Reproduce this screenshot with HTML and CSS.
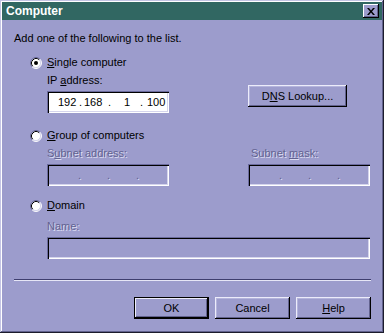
FILE: index.html
```html
<!DOCTYPE html>
<html>
<head>
<meta charset="utf-8">
<link rel="stylesheet" href="styles.css">
</head>
<body>
<div class="window">
  <div class="titlebar">
    <span class="title">Computer</span>
    <span class="close-btn">
      <svg width="8" height="7" viewBox="0 0 8 7"><path d="M0 0h2l2 2.5L6 0h2L5 3.5 8 7H6L4 4.5 2 7H0l3-3.5z" fill="#000"/></svg>
    </span>
  </div>
  <div class="content">
    <div class="intro">Add one of the following to the list.</div>

    <div class="radio-row first">
      <svg class="radio" width="12" height="12" viewBox="0 0 12 12">
        <circle cx="6" cy="6" r="5" fill="#fff"/>
        <path d="M2.11 9.89A5.5 5.5 0 0 1 9.89 2.11" fill="none" stroke="#6a6a9c"/>
        <path d="M9.89 2.11A5.5 5.5 0 0 1 2.11 9.89" fill="none" stroke="#fff"/>
        <path d="M2.82 9.18A4.5 4.5 0 0 1 9.18 2.82" fill="none" stroke="#000"/>
        <path d="M9.18 2.82A4.5 4.5 0 0 1 2.82 9.18" fill="none" stroke="#d4d4ec"/>
        <circle cx="6" cy="6" r="2" fill="#000"/>
      </svg>
      <span><u>S</u>ingle computer</span>
    </div>
    <div class="sub">
      <div class="label">IP <u>a</u>ddress:</div>
      <div class="field-row">
        <div class="box ip-box">
          <span>192</span><span>.</span><span>168</span><span>.</span><span>1</span><span>.</span><span>100</span>
        </div>
        <button class="btn dns">D<u>N</u>S Lookup...</button>
      </div>
    </div>

    <div class="radio-row group">
      <svg class="radio" width="12" height="12" viewBox="0 0 12 12">
        <circle cx="6" cy="6" r="5" fill="#fff"/>
        <path d="M2.11 9.89A5.5 5.5 0 0 1 9.89 2.11" fill="none" stroke="#6a6a9c"/>
        <path d="M9.89 2.11A5.5 5.5 0 0 1 2.11 9.89" fill="none" stroke="#fff"/>
        <path d="M2.82 9.18A4.5 4.5 0 0 1 9.18 2.82" fill="none" stroke="#000"/>
        <path d="M9.18 2.82A4.5 4.5 0 0 1 2.82 9.18" fill="none" stroke="#d4d4ec"/>
      </svg>
      <span><u>G</u>roup of computers</span>
    </div>
    <div class="sub">
      <div class="two-col">
        <div class="col">
          <div class="label disabled">S<u>u</u>bnet address:</div>
          <div class="box dis-box"><span class="d1">.</span><span class="d2">.</span><span class="d3">.</span></div>
        </div>
        <div class="col right">
          <div class="label disabled">Subnet <u>m</u>ask:</div>
          <div class="box dis-box"><span class="d1">.</span><span class="d2">.</span><span class="d3">.</span></div>
        </div>
      </div>
    </div>

    <div class="radio-row domain">
      <svg class="radio" width="12" height="12" viewBox="0 0 12 12">
        <circle cx="6" cy="6" r="5" fill="#fff"/>
        <path d="M2.11 9.89A5.5 5.5 0 0 1 9.89 2.11" fill="none" stroke="#6a6a9c"/>
        <path d="M9.89 2.11A5.5 5.5 0 0 1 2.11 9.89" fill="none" stroke="#fff"/>
        <path d="M2.82 9.18A4.5 4.5 0 0 1 9.18 2.82" fill="none" stroke="#000"/>
        <path d="M9.18 2.82A4.5 4.5 0 0 1 2.82 9.18" fill="none" stroke="#d4d4ec"/>
      </svg>
      <span><u>D</u>omain</span>
    </div>
    <div class="sub">
      <div class="label disabled name-label">Name:</div>
      <div class="box name-box"></div>
    </div>

    <div class="separator"></div>

    <div class="buttons">
      <button class="btn default">OK</button>
      <button class="btn">Cancel</button>
      <button class="btn"><u>H</u>elp</button>
    </div>
  </div>
</div>
</body>
</html>
```

FILE: styles.css
```css
html, body {
  margin: 0;
  padding: 0;
  background: #9c9ccc;
}

body {
  font-family: "Liberation Sans", Arial, sans-serif;
  font-size: 11px;
  color: #000;
}

.window {
  width: 384px;
  height: 333px;
  box-sizing: border-box;
  padding: 2px;
  background: #9c9ccc;
  box-shadow: inset -1px -1px #1c1c2c, inset 1px 1px #c4c4e4, inset -2px -2px #62628e, inset 2px 2px #ffffff;
}

.titlebar {
  height: 18px;
  background: #316762;
  display: flex;
  align-items: center;
  justify-content: space-between;
  padding: 0 3px 0 4px;
}

.title {
  color: #fff;
  font-weight: bold;
  font-size: 12px;
}

.close-btn {
  width: 16px;
  height: 14px;
  box-sizing: border-box;
  background: #9c9ccc;
  display: flex;
  align-items: center;
  justify-content: center;
  box-shadow: inset -1px -1px #000, inset 1px 1px #fff, inset -2px -2px #62628e;
}

.content {
  padding: 0 11px 0 12px;
}

.intro {
  line-height: 13px;
  margin-top: 12px;
}

.radio-row {
  display: flex;
  align-items: center;
  line-height: 13px;
  padding-left: 16px;
  gap: 5px;
}

.radio {
  display: block;
  flex: none;
}

.radio-row.first { margin-top: 11px; }
.radio-row.group { margin-top: 16px; }
.radio-row.domain { margin-top: 13px; }

.sub {
  padding-left: 33px;
}

.label {
  line-height: 13px;
  margin-top: 5px;
  white-space: nowrap;
}

.name-label { margin-top: 8px; }

.disabled {
  color: #626290;
  text-shadow: 1px 1px #dcdcf2;
}

.box {
  height: 22px;
  box-sizing: border-box;
  margin-top: 4px;
  box-shadow: inset 1px 1px #6a6a9c, inset 2px 2px #000, inset -1px -1px #ffffff, inset -2px -2px #d4d4ec;
}

.field-row {
  display: flex;
  align-items: flex-start;
  gap: 79px;
}

.ip-box {
  width: 122px;
  background: #fff;
  display: grid;
  grid-template-columns: 21px 5px 24px 16px 16px 7px auto;
  align-items: center;
  padding-left: 11px;
  font-size: 11px;
  line-height: 22px;
}

.btn {
  font-family: "Liberation Sans", Arial, sans-serif;
  font-size: 11px;
  color: #000;
  background: #9c9ccc;
  border: none;
  padding: 0;
  height: 22px;
  box-sizing: border-box;
  box-shadow: inset -1px -1px #000, inset 1px 1px #ececfa, inset -2px -2px #62628e, inset 2px 2px #b4b4dc;
}

.dns {
  width: 99px;
  margin-top: -2px;
}

.two-col {
  display: flex;
  gap: 79px;
}

.col .dis-box {
  width: 122px;
  position: relative;
  color: #626290;
  font-size: 11px;
  line-height: 22px;
}

.dis-box span {
  position: absolute;
  top: 0;
  text-shadow: 1px 1px #dcdcf2;
}

.dis-box .d1 { left: 31px; }
.dis-box .d2 { left: 60px; }
.dis-box .d3 { left: 89px; }

.col.right .label { padding-left: 3px; }

.name-box {
  width: 323px;
}

.separator {
  height: 2px;
  margin-top: 20px;
  box-shadow: inset 0 1px #3e3e6e, inset 0 -1px #e6e6f6;
}

.buttons {
  display: flex;
  justify-content: flex-end;
  gap: 6px;
  margin-top: 16px;
}

.buttons .btn {
  width: 75px;
}

.btn.default {
  box-shadow: inset 0 0 0 1px #000, inset -2px -2px #000, inset 2px 2px #ececfa, inset -3px -3px #62628e;
}
```
